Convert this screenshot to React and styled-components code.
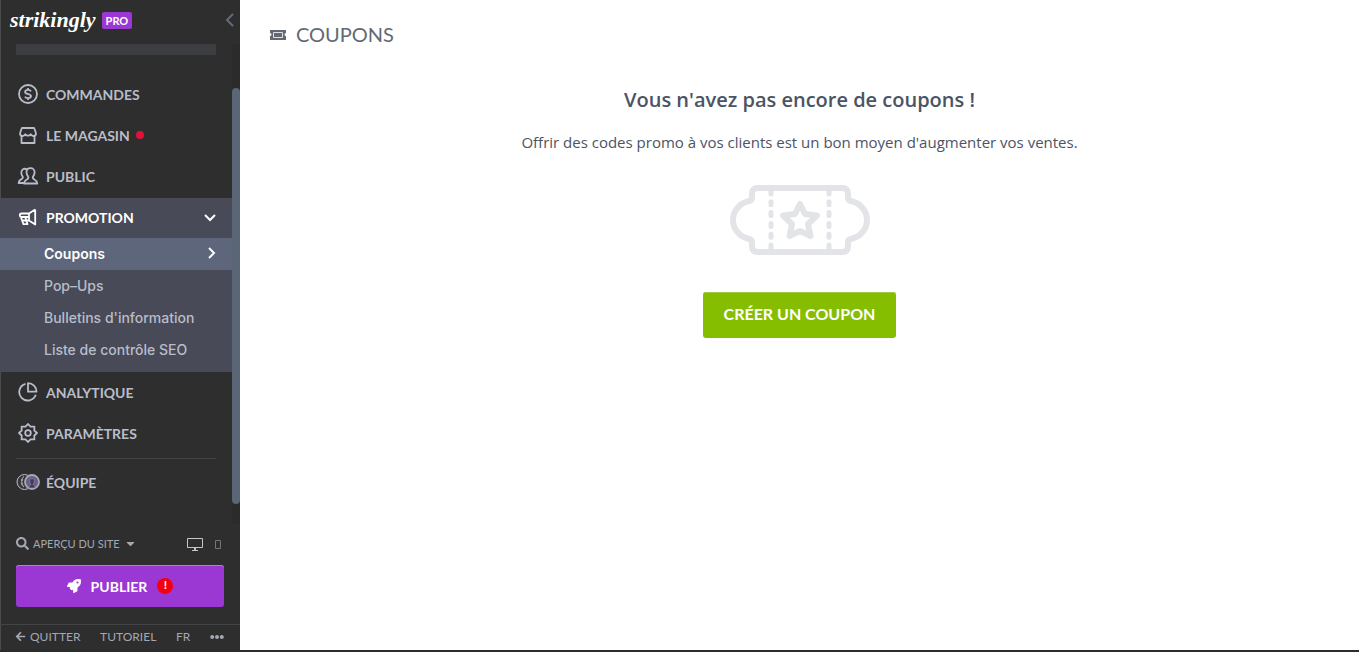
import styled, { createGlobalStyle, css } from "styled-components";
import { FaSearch, FaCaretDown, FaRocket, FaArrowLeft, FaEllipsisH } from "react-icons/fa";

const SUB_MENU = ["Coupons", "Pop–Ups", "Bulletins d'information", "Liste de contrôle SEO"];

export default function App() {
  return (
    <>
      <GlobalStyle />
      <Shell>
        <Sidebar>
          <SidebarHeader>
            <Brand href="#">strikingly</Brand>
            <ProBadge>PRO</ProBadge>
            <CollapseButton aria-label="Réduire le menu">
              <ChevronIcon d="M8 1 2 7l6 6" w={10} h={14} />
            </CollapseButton>
          </SidebarHeader>

          <ScrollArea>
            <Nav>
              <SiteBar />
              <NavList>
                <NavItem icon={<OrdersIcon />} label="COMMANDES" />
                <NavItem icon={<StoreIcon />} label="LE MAGASIN" dot />
                <NavItem icon={<AudienceIcon />} label="PUBLIC" />
                <li>
                  <NavLink href="#" $active>
                    <PromotionIcon />
                    <span>PROMOTION</span>
                    <Arrow>
                      <ChevronIcon d="M1 2l5 5 5-5" w={12} h={9} />
                    </Arrow>
                  </NavLink>
                  <SubList>
                    {SUB_MENU.map((label, i) => (
                      <li key={label}>
                        <SubLink href="#" $active={i === 0}>
                          {label}
                          {i === 0 && (
                            <Arrow>
                              <ChevronIcon d="M3 1l5 5-5 5" w={10} h={12} />
                            </Arrow>
                          )}
                        </SubLink>
                      </li>
                    ))}
                  </SubList>
                </li>
                <NavItem icon={<AnalyticsIcon />} label="ANALYTIQUE" />
                <NavItem icon={<SettingsIcon />} label="PARAMÈTRES" />
              </NavList>
              <Divider />
              <NavList>
                <NavItem icon={<TeamIcon />} label="ÉQUIPE" />
              </NavList>
            </Nav>
            <ScrollTrack>
              <ScrollThumb />
            </ScrollTrack>
          </ScrollArea>

          <PreviewRow>
            <PreviewButton>
              <FaSearch size={13} />
              APERÇU DU SITE
              <FaCaretDown size={13} />
            </PreviewButton>
            <DeviceButton aria-label="Ordinateur">
              <svg width="16" height="15" viewBox="0 0 16 15">
                <path d="M.5 1.500h15v9H.5z" fill="none" stroke="#c3c6cd" />
                <path d="M7 11h2v2h2v1H5v-1h2z" fill="#c3c6cd" />
              </svg>
            </DeviceButton>
            <DeviceButton aria-label="Mobile">
              <svg width="6" height="11" viewBox="0 0 6 11">
                <path d="M.5 1.500h5v8h-5z" fill="none" stroke="#73757a" />
              </svg>
            </DeviceButton>
          </PreviewRow>
          <PublishButton>
            <FaRocket size={14} />
            PUBLIER
            <Alert>!</Alert>
          </PublishButton>
          <SidebarFooter>
            <FooterLink href="#">
              <FaArrowLeft size={11} />
              QUITTER
            </FooterLink>
            <FooterLink href="#">TUTORIEL</FooterLink>
            <FooterLink href="#">FR</FooterLink>
            <FooterLink href="#" aria-label="Plus">
              <FaEllipsisH size={14} />
            </FooterLink>
          </SidebarFooter>
        </Sidebar>

        <Main>
          <PageTitle>
            <TicketIcon />
            COUPONS
          </PageTitle>
          <EmptyState>
            <EmptyTitle>Vous n'avez pas encore de coupons !</EmptyTitle>
            <EmptyText>
              Offrir des codes promo à vos clients est un bon moyen d'augmenter vos ventes.
            </EmptyText>
            <CouponArt />
            <CreateButton>CRÉER UN COUPON</CreateButton>
          </EmptyState>
        </Main>
      </Shell>
    </>
  );
}

function NavItem({ icon, label, dot }) {
  return (
    <li>
      <NavLink href="#">
        {icon}
        <span>{label}</span>
        {dot && <Dot />}
      </NavLink>
    </li>
  );
}

function ChevronIcon({ d, w, h }) {
  return (
    <svg width={w} height={h} viewBox={`0 0 ${w} ${h}`} fill="none" stroke="currentColor" strokeWidth="2">
      <path d={d} />
    </svg>
  );
}

function OrdersIcon() {
  return (
    <NavIcon viewBox="0 0 24 20">
      <circle cx="12" cy="10" r="9" />
      <path d="M15 7.300c-.5-1-1.600-1.400-3-1.400-1.700 0-2.900.7-2.900 2 0 1.400 1.400 1.700 2.900 2.100s3 .7 3 2.100c0 1.300-1.300 2-3 2-1.500 0-2.600-.5-3.100-1.500M12 4v2M12 14v2" />
    </NavIcon>
  );
}

function StoreIcon() {
  return (
    <NavIcon viewBox="0 0 24 20">
      <path d="M6.500 3h11q.8 0 1 .8L20 8.500q0 2.500-2.600 2.500-1.800 0-2.700-1.800-.9 1.500-2.700 1.500T9.300 9.200q-.9 1.800-2.700 1.800Q4 11 4 8.500l1.500-4.700q.2-.8 1-.8z" />
      <path d="M5.500 11v7h13v-7" />
    </NavIcon>
  );
}

function AudienceIcon() {
  return (
    <NavIcon viewBox="0 0 24 20">
      <path d="M14.500 2.200c-2.500 0-4 1.700-4 4.100 0 2 .8 3.400 1.800 4.500.4 1.500-.2 2.200-1.800 2.900-1.600.7-2.300 1.500-2.500 3.800h13.300c-.2-2.300-1-3.100-2.600-3.800-1.500-.7-2.200-1.400-1.800-2.900 1-1.100 1.700-2.500 1.700-4.500 0-2.400-1.600-4.100-4.100-4.100z" />
      <path d="M11 3.400c-3-1.700-5.700.2-5.700 3.400 0 1.800.6 3 1.500 4 .3 1.400-.3 2-1.700 2.600-1.500.7-2.300 1.300-2.500 3.600h5.600" />
    </NavIcon>
  );
}

function PromotionIcon() {
  return (
    <NavIcon viewBox="0 0 24 20">
      <path d="M19.200 2.500v15L13 13.500H9.500M19.200 2.500 13 6.500H5.500Q3.800 6.500 3.800 8.200T5.500 10H13M13 6.500v7" />
      <path d="M5 10.500 7.500 17.200h4L9.300 10M6 13.500h3.500" />
    </NavIcon>
  );
}

function AnalyticsIcon() {
  return (
    <NavIcon viewBox="0 0 24 20">
      <path d="M9.500 1.800a8.500 8.500 0 1 0 10.300 11" />
      <path d="M12 1.200a8.500 8.500 0 0 1 8.500 8.500H12z" />
    </NavIcon>
  );
}

function SettingsIcon() {
  return (
    <NavIcon viewBox="0 0 24 20">
      <path d="M12 1l2.500 2.700 3.900-.1-.1 3.900L21 10l-2.700 2.500.1 3.900-3.900-.1L12 19l-2.500-2.700-3.900.1.1-3.900L3 10l2.700-2.500-.1-3.900 3.900.1z" />
      <circle cx="12" cy="10" r="2.800" />
    </NavIcon>
  );
}

function TeamIcon() {
  return (
    <NavIcon viewBox="0 0 24 20">
      <circle cx="8.500" cy="10" r="7.500" fill="#383939" strokeWidth="1" />
      <path d="M8 4.500c-3 2-3 8 0 10.500M5 8h2m-2 4h2" strokeWidth="1" />
      <circle cx="16" cy="10" r="7" fill="#665f87" stroke="#a8a7b5" />
      <path d="M13 15.500c0-2 1-2.500 2-3-2-2-2-6 1-6s3 4 1 6c1 .5 2 1 2 3" fill="#453b60" stroke="#8b84a4" strokeWidth=".8" />
    </NavIcon>
  );
}

function TicketIcon() {
  return (
    <svg width="16" height="14" viewBox="0 0 16 14">
      <path
        d="M0 3h16v3a1.500 1.500 0 0 0 0 3v4H0V9a1.500 1.500 0 0 0 0-3z"
        fill="#636972"
      />
      <path d="M3.500 5.500h9v5h-9z" fill="none" stroke="#dfe1e4" />
    </svg>
  );
}

function CouponArt() {
  return (
    <svg width="140" height="70" viewBox="0 0 140 70" fill="none" stroke="#e2e4e7" strokeWidth="6">
      <path
        strokeLinejoin="round"
        d="M28 3h84q6 0 6 6v4q0 2.500 3 3c9 2 16 9.500 16 19s-7 17-16 19q-3 .5-3 3v4q0 6-6 6H28q-6 0-6-6v-4q0-2.500-3-3C10 52 3 44.500 3 35s7-17 16-19q3-.5 3-3V9q0-6 6-6z"
      />
      <path strokeWidth="5" strokeLinecap="round" strokeDasharray="3 7.800" d="M41 6v60M99 6v60" />
      <path
        strokeLinejoin="round"
        d="M70 19l5 10 12 1.500-9 8.500 2.500 12L70 46l-10.500 5 2.500-12-9-8.500L65 29z"
      />
    </svg>
  );
}

const GlobalStyle = createGlobalStyle`
  * {
    box-sizing: border-box;
  }

  body {
    margin: 0;
    background: #fff;
    font-family: "Open Sans", sans-serif;
  }

  ul {
    list-style: none;
    margin: 0;
    padding: 0;
  }

  a {
    text-decoration: none;
  }

  button {
    border: 0;
    padding: 0;
    background: none;
    cursor: pointer;
  }

  svg {
    display: block;
    flex: none;
  }
`;

const flexRow = css`
  display: flex;
  align-items: center;
`;

const Shell = styled.div`
  display: flex;
  min-height: 100vh;
  border-bottom: 2px solid #2b2c2e;
`;

const Sidebar = styled.aside`
  display: flex;
  flex-direction: column;
  flex: none;
  width: 240px;
  background: #2e2e2e;
  box-shadow: inset 1px 0 #4a4b4c;
  font-family: Lato, sans-serif;
`;

const SidebarHeader = styled.header`
  ${flexRow}
  height: 44px;
  padding: 0 5px 4px 10px;
`;

const Brand = styled.a`
  color: #fff;
  font: italic bold 22px/24px "Liberation Serif", serif;
`;

const ProBadge = styled.span`
  margin-left: 6px;
  padding: 0 4px;
  border-radius: 2px;
  background: #9b38d3;
  color: #fff;
  font-size: 11px;
  font-weight: 700;
  line-height: 17px;
`;

const CollapseButton = styled.button`
  margin-left: auto;
  color: #636b78;
`;

const ScrollArea = styled.div`
  display: flex;
  flex: 1;
`;

const Nav = styled.nav`
  flex: 1;
`;

const SiteBar = styled.div`
  height: 11px;
  margin: 0 16px 20px;
  background: #3d3e42;
`;

const NavList = styled.ul`
  display: flex;
  flex-direction: column;
  gap: 1px;
`;

const NavLink = styled.a`
  ${flexRow}
  gap: 6px;
  height: 40px;
  padding: 0 16px 2px;
  color: ${({ $active }) => ($active ? "#fff" : "#b9bdc9")};
  background: ${({ $active }) => ($active ? "#484a58" : "transparent")};
  font-size: 14px;
  font-weight: 700;
`;

const NavIcon = styled.svg`
  width: 24px;
  height: 20px;
  fill: none;
  stroke: currentColor;
  stroke-width: 1.8;
  stroke-linejoin: round;
`;

const Dot = styled.i`
  width: 8px;
  height: 8px;
  border-radius: 50%;
  background: #e30f3c;
`;

const Arrow = styled.span`
  margin-left: auto;
`;

const SubList = styled.ul`
  padding-bottom: 6px;
  background: #484a58;
`;

const SubLink = styled.a`
  ${flexRow}
  height: 32px;
  padding: 0 16px 2px 44px;
  color: ${({ $active }) => ($active ? "#fff" : "#b9bdc9")};
  background: ${({ $active }) => ($active ? "#5d667a" : "transparent")};
  font-family: Inter, sans-serif;
  font-size: 14px;
  font-weight: ${({ $active }) => ($active ? 600 : 500)};
`;

const Divider = styled.hr`
  height: 1px;
  margin: 4px 16px;
  border: 0;
  background: #434446;
`;

const ScrollTrack = styled.div`
  display: flex;
  flex-direction: column;
  width: 8px;
  padding: 44px 0 20px;
  background: #2b2b2c;
`;

const ScrollThumb = styled.div`
  flex: 1;
  border-radius: 4px;
  background: #5a6675;
`;

const PreviewRow = styled.div`
  ${flexRow}
  gap: 12px;
  height: 41px;
  padding: 0 19px 0 16px;
`;

const PreviewButton = styled.button`
  ${flexRow}
  gap: 4px;
  margin-right: auto;
  padding-bottom: 2px;
  color: #a3a8b2;
  font: 11px Lato, sans-serif;
`;

const DeviceButton = styled.button`
  ${flexRow}
`;

const PublishButton = styled.button`
  ${flexRow}
  justify-content: center;
  gap: 10px;
  height: 42px;
  margin: 0 16px 17px;
  border-radius: 3px;
  background: #9b38d3;
  box-shadow: inset 0 1px #b878de;
  color: #fff;
  font: 700 14px Lato, sans-serif;
`;

const Alert = styled.span`
  width: 16px;
  height: 16px;
  border-radius: 50%;
  background: #f5000f;
  font-size: 12px;
  line-height: 14px;
`;

const SidebarFooter = styled.footer`
  ${flexRow}
  justify-content: space-between;
  height: 26px;
  padding: 0 16px 2px 15px;
  border-top: 1px solid #434446;
`;

const FooterLink = styled.a`
  ${flexRow}
  gap: 4px;
  color: #a3a8b2;
  font-size: 12px;
`;

const Main = styled.main`
  flex: 1;
  padding: 20px 30px;
  color: #4b5463;
`;

const PageTitle = styled.h1`
  ${flexRow}
  gap: 10px;
  margin: 0;
  color: #636972;
  font: 400 20px/28px Lato, sans-serif;
`;

const EmptyState = styled.section`
  display: flex;
  flex-direction: column;
  align-items: center;
  padding-top: 38px;
  text-align: center;
`;

const EmptyTitle = styled.h2`
  margin: 0 0 17px;
  font-size: 20px;
  font-weight: 600;
  line-height: 28px;
`;

const EmptyText = styled.p`
  margin: 0 0 32px;
  font-size: 15px;
  line-height: 22px;
`;

const CreateButton = styled.button`
  height: 46px;
  margin-top: 37px;
  padding: 0 21px 4px;
  border-radius: 3px;
  background: #85be00;
  box-shadow: inset 0 1px #a0cb40;
  color: #fff;
  font: 700 16px Lato, sans-serif;
`;
